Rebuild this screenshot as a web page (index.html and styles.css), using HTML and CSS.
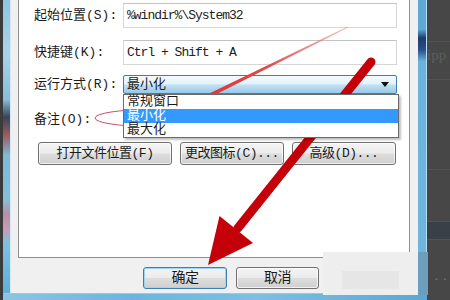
FILE: index.html
```html
<!DOCTYPE html>
<html lang="zh-CN">
<head>
    <meta charset="UTF-8">
    <meta name="viewport" content="width=device-width, initial-scale=1.0">
    <title>快捷方式属性</title>
    <link rel="stylesheet" href="styles.css">
</head>
<body>
    <div class="screen">
        <div class="desk-edge"></div>
        <div class="window">
            <div class="window-body">
                <div class="frame-left"></div>
                <div class="dialog">
                    <div class="panel">
                        <div class="row row-start">
                            <span class="label">起始位置(S):</span>
                            <div class="textbox">%windir%\System32</div>
                        </div>
                        <div class="row row-hotkey">
                            <span class="label">快捷键(K):</span>
                            <div class="textbox">Ctrl + Shift + A</div>
                        </div>
                        <div class="row row-run">
                            <span class="label">运行方式(R):</span>
                            <div class="combo">
                                <span class="combo-value">最小化</span>
                                <span class="combo-arrow"></span>
                                <ul class="combo-list">
                                    <li>常规窗口</li>
                                    <li class="selected">最小化</li>
                                    <li>最大化</li>
                                </ul>
                            </div>
                        </div>
                        <div class="row row-note">
                            <span class="label">备注(O):</span>
                            <div class="textbox"></div>
                        </div>
                        <div class="actions">
                            <button class="btn btn-open">打开文件位置(F)</button>
                            <button class="btn btn-icon">更改图标(C)...</button>
                            <button class="btn btn-adv">高级(D)...</button>
                        </div>
                    </div>
                    <div class="footer">
                        <button class="btn btn-ok">确定</button>
                        <button class="btn btn-cancel">取消</button>
                    </div>
                </div>
                <div class="frame-right"></div>
            </div>
            <div class="frame-bottom"></div>
        </div>
        <div class="desk">
            <div class="desk-row desk-top"></div>
            <div class="desk-row desk-text">ipp</div>
            <div class="desk-row desk-line"></div>
            <div class="desk-row desk-mid"></div>
            <div class="desk-row desk-band"></div>
            <div class="desk-row desk-dots">..</div>
        </div>
    </div>

    <!-- patch hiding the apply button -->
    <div class="patch"><div class="patch-inner"></div></div>
    <div class="patch-edge"></div>

    <!-- hand drawn marks -->
    <svg class="marks" width="450" height="300" viewBox="0 0 450 300">
        <defs>
            <linearGradient id="thin" x1="348" y1="27" x2="166" y2="117" gradientUnits="userSpaceOnUse">
                <stop offset="0" stop-color="#e89090" stop-opacity="0.6"/>
                <stop offset="0.45" stop-color="#e04848"/>
                <stop offset="1" stop-color="#e02828"/>
            </linearGradient>
        </defs>
        <ellipse cx="150" cy="118" rx="55" ry="8.5" fill="none" stroke="#c8506e" stroke-width="1"/>
        <polygon fill="url(#thin)" points="348.2,27.4 181.1,112.1 183.1,115.5 166,117 177.7,104.5 179.3,107.9 347.8,26.6"/>
        <line x1="371" y1="62" x2="238" y2="228" stroke="#c40008" stroke-width="9" stroke-linecap="round"/>
        <polygon fill="#c40008" points="208,265 253,243 219.5,216"/>
    </svg>
</body>
</html>
```

FILE: styles.css
```css
*{
    margin: 0;
    padding: 0;
    box-sizing: border-box;
}
body{
    width: 450px;
    height: 300px;
    overflow: hidden;
    position: relative;
    background: #474747;
    color: #1b1b1b;
    font-family: "Liberation Mono", "Noto Sans CJK SC", monospace;
    font-size: 13px;
    line-height: 15px;
}
.screen{
    display: flex;
    height: 300px;
}
.desk-edge{
    width: 3px;
    background: #3b3b3b;
}
.window{
    width: 424px;
    display: flex;
    flex-direction: column;
}
.window-body{
    display: flex;
    height: 293px;
}
.frame-left{
    width: 8px;
    background: linear-gradient(#8cc6e2 0, #a8d4ea 18%, #86bddb 34%, #39435c 40%, #9a5b5e 46%, #7fb8d8 53%, #84c0de 68%, #b58fa8 73%, #c99cb2 78%, #7fc0e0 83%, #5eafd9 100%);
    border-right: 1px solid #d8e6ef;
}
.frame-right{
    width: 9px;
    background: linear-gradient(#5fa9d6 0, #5fa9d6 10%, #1e3c6c 13%, #27508a 17%, #6ab3dc 21%, #6fb6de 100%);
    border-right: 1px solid #b8e0f4;
}
.frame-bottom{
    height: 7px;
    background: linear-gradient(90deg, #8ac6e2, #6bb5dd 30%, #7cc0e2 60%, #5aa7d4);
    border-top: 1px solid #9fc8dd;
}
.dialog{
    width: 407px;
    background: #f0f0f0;
    padding: 0 8px 0 7px;
}

/* tab panel */
.panel{
    height: 258px;
    background: #fff;
    border: 1px solid #8e8f8f;
    border-top: none;
    padding: 3px 12px 0 15px;
}
.row{
    display: flex;
    align-items: center;
}
.row-start{
    height: 25px;
}
.row-hotkey{
    height: 25px;
    margin-top: 12px;
}
.row-run{
    height: 19px;
    margin-top: 10px;
}
.row-note{
    height: 24px;
    margin-top: 13px;
}
.label{
    width: 89px;
    flex-shrink: 0;
}
.textbox{
    width: 274px;
    height: 100%;
    border: 1px solid #d6d6d6;
    border-top-color: #c2c2c2;
    padding-left: 3px;
    letter-spacing: -1px;
    display: flex;
    align-items: center;
    color: #222;
}

/* combo box */
.combo{
    position: relative;
    width: 274px;
    height: 19px;
    border: 1px solid #3c7fb1;
    border-radius: 2px;
    background: linear-gradient(#f4fafd 0, #e3f2fb 45%, #bfe0f4 55%, #98c9e8 100%);
    padding-left: 3px;
    display: flex;
    align-items: center;
}
.combo-value{
    flex: 1;
}
.combo-arrow{
    width: 0;
    height: 0;
    border-left: 4px solid transparent;
    border-right: 4px solid transparent;
    border-top: 5px solid #111;
    margin-right: 7px;
}
.combo-list{
    list-style: none;
    position: absolute;
    top: 18px;
    left: -1px;
    width: 276px;
    background: #fff;
    border: 1px solid #6a6a6a;
    box-shadow: 2px 2px 2px rgba(0, 0, 0, 0.25);
    z-index: 2;
}
.combo-list li{
    height: 14px;
    line-height: 14px;
    padding-left: 3px;
}
.combo-list .selected{
    background: #3399ff;
    color: #fff;
}

/* buttons */
.btn{
    font: inherit;
    color: #1b1b1b;
    border: 1px solid #707070;
    border-radius: 3px;
    background: linear-gradient(#f4f4f4 0, #ebebeb 48%, #dddddd 52%, #cfcfcf 100%);
    box-shadow: inset 0 0 0 1px rgba(255, 255, 255, 0.7);
    letter-spacing: -0.5px;
}
.actions{
    display: flex;
    gap: 8px;
    padding-left: 4px;
    margin-top: 11px;
}
.actions .btn{
    height: 23px;
}
.btn-open{
    width: 134px;
}
.btn-icon{
    width: 104px;
}
.btn-adv{
    width: 104px;
}
.footer{
    display: flex;
    gap: 9px;
    padding: 9px 0 0 125px;
}
.footer .btn{
    height: 22px;
    font-size: 14px;
}
.btn-ok{
    width: 84px;
    border-color: #3c7fb1;
    box-shadow: inset 0 0 0 1px #9fd5f3;
}
.btn-cancel{
    width: 83px;
}

/* desktop behind the window */
.desk{
    flex: 1;
    display: flex;
    flex-direction: column;
    overflow: hidden;
    white-space: nowrap;
}
.desk-row{
    border-bottom: 1px solid #525252;
}
.desk-top{
    height: 42px;
}
.desk-text{
    height: 38px;
    padding-top: 6px;
    font-family: "Liberation Serif", serif;
    font-size: 15px;
    color: #5e5e5e;
}
.desk-line{
    height: 90px;
}
.desk-mid{
    height: 52px;
}
.desk-band{
    height: 18px;
    background: #3a4048;
}
.desk-dots{
    flex: 1;
    padding: 30px 0 0 6px;
    font-size: 11px;
    letter-spacing: 2px;
    color: #777;
    border-bottom: none;
}

/* patch and marks on top */
.patch{
    position: absolute;
    left: 323px;
    top: 252px;
    width: 95px;
    height: 43px;
    background: #eeeeee;
    padding: 19px 0 0 19px;
}
.patch-inner{
    width: 57px;
    height: 18px;
    background: #e6e6e6;
}
.patch-edge{
    position: absolute;
    left: 418px;
    top: 252px;
    width: 10px;
    height: 43px;
    background: #6c9fbd;
}
.marks{
    position: absolute;
    top: 0;
    left: 0;
    pointer-events: none;
}
```
